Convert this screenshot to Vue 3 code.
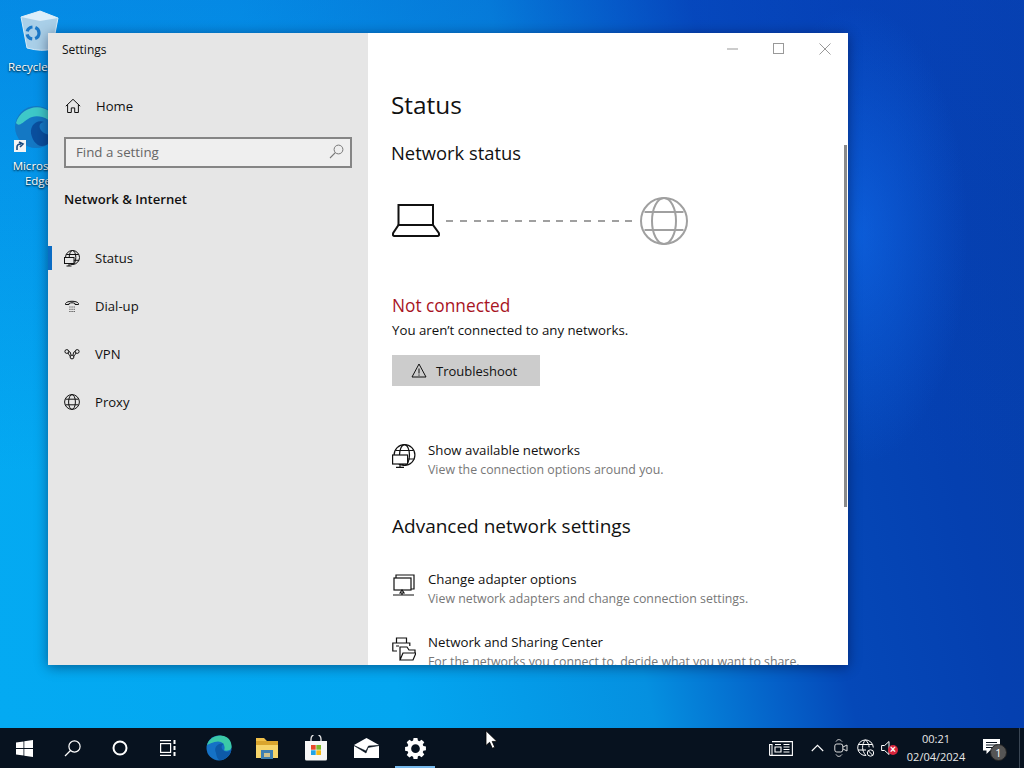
<script setup>
const navItems = [
  { id: 'status', label: 'Status', active: true },
  { id: 'dial', label: 'Dial-up' },
  { id: 'vpn', label: 'VPN' },
  { id: 'proxy', label: 'Proxy' }
]
</script>

<template>
  <div class="desktop">
    <div class="wallpaper">
      <div class="desk-icon recycle">
        <svg width="44" height="46" viewBox="0 0 44 46">
          <path d="M5 9 L24 3 L42 10 L36 41 Q26 44 11 40 Z" fill="#a9cfe8" stroke="#d8ecf8" stroke-width="1"/>
          <path d="M5 9 L24 13 L42 10 L24 3 Z" fill="#dceefa"/>
          <circle cx="17" cy="25" r="6" fill="none" stroke="#1b78c8" stroke-width="3.2" stroke-dasharray="7 3"/>
        </svg>
        <span>Recycle Bin</span>
      </div>
      <div class="desk-icon edge-icon">
        <svg width="44" height="48" viewBox="0 0 44 48">
          <circle cx="22" cy="22" r="21" fill="#1478c4"/>
          <path d="M2 18 C6 4 24 -3 36 7 C42 12 43 18 43 24 C36 12 22 8 14 14 C8 18 5 22 2 18Z" fill="#3ec8c8"/>
          <path d="M18 32 C14 22 22 14 30 17 C24 18 24 24 30 28 C35 31 40 30 43 27 C41 36 30 44 24 40 C21 38 19 35 18 32Z" fill="#0a4f9e"/>
          <rect x="0" y="35" width="12" height="12" fill="#f4f4f4"/>
          <path d="M3 45 L3 42 Q3 39 7 39 M5 37 L9 39 L6 42" fill="none" stroke="#1a4a80" stroke-width="1.6"/>
        </svg>
        <span>Microsoft<br>Edge</span>
      </div>

      <section class="window">
        <aside class="sidebar">
          <div class="win-title">Settings</div>
          <div class="home">
            <svg class="nav-svg" width="16" height="16" viewBox="0 0 16 16">
              <path d="M.8 8.2 8 1.3l7.2 6.9M2.6 6.700v7.800h3.700v-4.600h3.400v4.600h3.700V6.700" fill="none" stroke="#111" stroke-width="1"/>
            </svg>
            <span>Home</span>
          </div>
          <div class="search">
            <span>Find a setting</span>
            <svg width="15" height="15" viewBox="0 0 15 15">
              <circle cx="9.500" cy="5.500" r="4.400" fill="none" stroke="#777" stroke-width="1"/>
              <path d="M6.300 8.700 1 14" stroke="#777" stroke-width="1.100"/>
            </svg>
          </div>
          <div class="group-title">Network &amp; Internet</div>
          <nav class="nav">
            <div v-for="item in navItems" :key="item.id" class="nav-row" :class="{ active: item.active }">
              <svg v-if="item.id === 'status'" width="16" height="17" viewBox="0 0 16 17" fill="none" stroke="#111" stroke-width="1">
                <circle cx="8.500" cy="7.500" r="7"/><ellipse cx="8.500" cy="7.500" rx="3.300" ry="7"/>
                <path d="M2.300 4.500h12.400M2 10.300h13"/>
                <rect x=".5" y="7.500" width="9.500" height="6" fill="#e6e6e6"/><path d="M5 13.500v2.500M2.500 16h5"/>
              </svg>
              <svg v-else-if="item.id === 'dial'" width="16" height="16" viewBox="0 0 16 16" fill="none" stroke="#111" stroke-width="1">
                <path d="M1.500 6.500V5.500C3 2.500 13 2.500 14.500 5.500V6.500H11V5.500C9 4.500 7 4.500 5 5.500V6.500Z"/>
                <path d="M5.500 9h.9M7.600 9h.9M9.700 9h.9M5.500 11.300h.9M7.600 11.300h.9M9.700 11.300h.9M5.500 13.500h.9M7.600 13.500h.9M9.700 13.500h.9"/>
              </svg>
              <svg v-else-if="item.id === 'vpn'" width="16" height="16" viewBox="0 0 16 16" fill="none" stroke="#111" stroke-width="1">
                <circle cx="2.800" cy="5.500" r="1.900"/><circle cx="13.200" cy="5.500" r="1.900"/><circle cx="8" cy="11" r="1.900"/>
                <path d="M4.700 5.500C7 5.500 6.500 8 7 9.300M11.300 5.500C9 5.500 9.500 8 9 9.300M4 7c1 2 2 3 2.200 3.500M12 7c-1 2-2 3-2.200 3.500"/>
              </svg>
              <svg v-else width="16" height="16" viewBox="0 0 16 16" fill="none" stroke="#111" stroke-width="1">
                <circle cx="8" cy="8" r="7.400"/><ellipse cx="8" cy="8" rx="3.400" ry="7.400"/><path d="M1.500 5.200h13M1.500 10.800h13"/>
              </svg>
              <span>{{ item.label }}</span>
            </div>
          </nav>
        </aside>

        <main class="content">
          <div class="controls">
            <svg width="12" height="12" viewBox="0 0 12 12"><path d="M0 6h11" stroke="#999"/></svg>
            <svg width="12" height="12" viewBox="0 0 12 12"><rect x=".5" y=".5" width="10" height="10" fill="none" stroke="#999"/></svg>
            <svg width="12" height="12" viewBox="0 0 12 12"><path d="M.5.5l11 11M11.500.5l-11 11" stroke="#999"/></svg>
          </div>
          <h1>Status</h1>
          <h2>Network status</h2>
          <div class="diagram">
            <svg width="48" height="36" viewBox="0 0 48 36" fill="none" stroke="#111" stroke-width="2">
              <path d="M6.500 22V2h34.500v20"/>
              <path d="M6.500 22 1.200 30Q.3 33 2.500 33H45.500Q47.700 33 46.800 30L41 22Z"/>
            </svg>
            <div class="dashes"></div>
            <svg width="48" height="48" viewBox="0 0 48 48" fill="none" stroke="#a0a0a0" stroke-width="2">
              <circle cx="24" cy="24" r="23"/><ellipse cx="24" cy="24" rx="12" ry="23"/>
              <path d="M4.500 15h39M4.500 33h39"/>
            </svg>
          </div>
          <div class="state">Not connected</div>
          <div class="state-sub">You aren’t connected to any networks.</div>
          <button class="trouble">
            <svg width="16" height="15" viewBox="0 0 16 15" fill="none" stroke="#111" stroke-width="1">
              <path d="M8 1 15 14H1ZM8 5.500V10.500M8 11.500v1.200"/>
            </svg>
            <span>Troubleshoot</span>
          </button>
          <div class="link-row first">
            <svg width="24" height="24" viewBox="0 0 24 24" fill="none" stroke="#111" stroke-width="1.200">
              <circle cx="12.500" cy="11" r="10.400"/><ellipse cx="12.500" cy="11" rx="5" ry="10.400"/>
              <path d="M3.500 6.500h18M2.500 15h20"/>
              <rect x=".6" y="11" width="15" height="9" fill="#fff"/><path d="M8 20v3M4 23.300h8"/>
            </svg>
            <div><div class="link-t">Show available networks</div><div class="link-s">View the connection options around you.</div></div>
          </div>
          <h3>Advanced network settings</h3>
          <div class="link-row adapter">
            <svg width="24" height="24" viewBox="0 0 24 24" fill="none" stroke="#111" stroke-width="1.200">
              <path d="M4 4V1h18v14h-3"/><rect x="2" y="4" width="17" height="12"/>
              <path d="M8 19l2-3 2 3ZM1 21h21M10 19v2"/>
            </svg>
            <div><div class="link-t">Change adapter options</div><div class="link-s">View network adapters and change connection settings.</div></div>
          </div>
          <div class="link-row sharing">
            <svg width="24" height="24" viewBox="0 0 24 24" fill="none" stroke="#111" stroke-width="1.200">
              <path d="M4.500 6V1h10v5M5 14H.8V6h17v3M4 9h3"/>
              <path d="M8 23V10h7l2 3h6v3M8 23h13l3-7H11Z"/>
            </svg>
            <div><div class="link-t">Network and Sharing Center</div><div class="link-s">For the networks you connect to, decide what you want to share.</div></div>
          </div>
          <div class="scroll-thumb"></div>
        </main>
      </section>
    </div>

    <footer class="taskbar">
      <div class="task-left">
        <div class="tb"><svg width="17" height="17" viewBox="0 0 17 17" fill="#fff"><path d="M0 2.500 7.500 1.400V8H0ZM8.300 1.300 17 0V8H8.300ZM0 9H7.500V15.600L0 14.500ZM8.300 9H17V17L8.300 15.700Z"/></svg></div>
        <div class="tb"><svg width="17" height="17" viewBox="0 0 17 17" fill="none" stroke="#fff" stroke-width="1.200"><circle cx="10.500" cy="6.500" r="5.600"/><path d="M6.500 10.500 1 16"/></svg></div>
        <div class="tb"><svg width="16" height="16" viewBox="0 0 16 16" fill="none" stroke="#fff" stroke-width="2"><circle cx="8" cy="8" r="6.500"/></svg></div>
        <div class="tb"><svg width="17" height="16" viewBox="0 0 17 16" fill="none" stroke="#fff" stroke-width="1.200"><path d="M0 .6h11M0 15.400h11"/><rect x=".6" y="3.600" width="10" height="8.800"/><path d="M14.500 0v4M14.500 6v4M14.500 12v4" stroke-width="2"/></svg></div>
        <div class="tb edge"><svg width="26" height="26" viewBox="0 0 26 26">
          <circle cx="13" cy="13" r="12.500" fill="#1572c6"/>
          <path d="M1 10C3 3 11-1 18 1c5 1.500 8 6 7.500 11.500C25 15.500 21 16 18 15.500 20 11 17 6.500 12 6.500 7 6.500 3.500 9 1 10Z" fill="#3bc9a8"/>
          <path d="M10 18C7 12 13 7 18 9c-3 1-3 4-1 6 3 3 7 2 8.500-1-.5 6-7 12-12 11-2-.5-3-4-3.500-7Z" fill="#0d5aa8"/>
        </svg></div>
        <div class="tb"><svg width="24" height="22" viewBox="0 0 24 22">
          <path d="M1 1h8l3 3h11v17H1Z" fill="#f0c04a"/><path d="M1 4h22v4H1Z" fill="#d9a52e"/><path d="M1 8h22v13H1Z" fill="#f6d56b"/>
          <rect x="6" y="13" width="12" height="9" fill="#3f7fb0"/><rect x="9" y="16" width="6" height="4" fill="#cfc28f"/>
        </svg></div>
        <div class="tb store"><svg width="24" height="26" viewBox="0 0 24 26">
          <path d="M7 6V4a5 5 0 0 1 10 0v2" fill="none" stroke="#e8e8e8" stroke-width="1.300"/>
          <path d="M1 6h22v18a1.500 1.500 0 0 1-1.500 1.500h-19A1.500 1.500 0 0 1 1 24Z" fill="#f7f7f7"/>
          <rect x="7" y="10" width="4.700" height="4.700" fill="#e8492a"/><rect x="12.300" y="10" width="4.700" height="4.700" fill="#7cba2a"/>
          <rect x="7" y="15.300" width="4.700" height="4.700" fill="#1fa4e8"/><rect x="12.300" y="15.300" width="4.700" height="4.700" fill="#f5b915"/>
        </svg></div>
        <div class="tb mail"><svg width="25" height="20" viewBox="0 0 25 20">
          <path d="M0 7 12.500 0 25 7v13H0Z" fill="#fff"/>
          <path d="M0 7.500 12 15 14 9.500 25 7.500 14.500 8 12 13Z" fill="#07121f" stroke="#07121f" stroke-width=".6"/>
        </svg></div>
        <div class="tb on"><svg width="21" height="21" viewBox="0 0 20 20">
          <path fill="#fff" fill-rule="evenodd" d="M8 0h4l.5 2.700 1.500.6 2.300-1.600 2.800 2.800-1.600 2.300.6 1.500 2.700.5v4l-2.700.5-.6 1.500 1.600 2.300-2.800 2.800-2.300-1.600-1.500.6L12 22H8l-.5-2.700-1.500-.6-2.300 1.600L.900 17.500l1.600-2.300-.6-1.500L-.8 13.200v-4l2.700-.5.6-1.500L.900 4.500 3.700 1.700 6 3.300l1.500-.6ZM10 6.500a4.500 4.500 0 1 0 0 9 4.500 4.500 0 0 0 0-9Z" transform="translate(.8 .0) scale(.92)"/>
        </svg></div>
      </div>
      <div class="tray">
        <svg class="news" width="24" height="15" viewBox="0 0 24 15" fill="none" stroke="#fff" stroke-width="1.100">
          <path d="M3 .6h20.400v13.800H1A.5.500 0 0 1 .6 14V3.500H3v11M6 3.500h6M6 6h6v5H6ZM14.500 3.500h6M14.500 6h6M14.500 8.500h6M14.500 11h6"/>
        </svg>
        <svg class="chev" width="13" height="8" viewBox="0 0 13 8" fill="none" stroke="#fff" stroke-width="1.100"><path d="M.8 7 6.500 1.300 12.200 7"/></svg>
        <svg class="meet" width="14" height="18" viewBox="0 0 14 18" fill="none" stroke="#ddd" stroke-width="1"><rect x=".8" y="5" width="8" height="8" rx="2"/><path d="m9 8 4-2v6l-4-2M2 2.500C3.500 0 6 0 8 2.500M2 15.500c1.500 2.500 4 2.500 6 0"/></svg>
        <svg class="glb" width="17" height="18" viewBox="0 0 17 18" fill="none" stroke="#fff" stroke-width="1">
          <path d="M9 16.500A7.800 7.800 0 1 1 16.300 8.500M8.500.8c-4 4.500-4 11 .5 15.700M8.500.8c2.800 3 3.500 5 3.600 7.500M1.500 5.500h14M1 11h8"/>
          <circle cx="13.500" cy="14" r="3.200"/><path d="m11.300 11.800 4.400 4.400"/>
        </svg>
        <span class="spk">
          <svg width="12" height="16" viewBox="0 0 12 16" fill="none" stroke="#fff" stroke-width="1"><path d="M.6 5.500h3L8 1.500v13l-4.400-4H.6Z"/></svg>
          <i>×</i>
        </span>
        <div class="clock"><div>00:21</div><div>02/04/2024</div></div>
        <span class="notif">
          <svg width="17" height="15" viewBox="0 0 17 15" fill="#fff"><path d="M0 0h17v11.500H7L3.500 15v-3.500H0Z"/><path d="M3 3.500h11M3 6h11M3 8.500h8" stroke="#07121f"/></svg>
          <b>1</b>
        </span>
        <div class="show-desk"></div>
      </div>
      <svg class="cursor" width="13" height="19" viewBox="0 0 13 19"><path d="M1 .8V15.500l3.600-3.200 2.700 6 2.500-1.100-2.600-5.800h4.800Z" fill="#fff" stroke="#000" stroke-width=".8"/></svg>
    </footer>
  </div>
</template>

<style>
html, body { margin: 0; overflow: hidden; }
</style>

<style scoped>
.desktop {
  width: 1024px; height: 768px; display: flex; flex-direction: column; overflow: hidden;
  font-family: "Open Sans", "Noto Sans", sans-serif; color: #111; position: relative;
}
.wallpaper {
  flex: 1; position: relative;
  background:
    radial-gradient(ellipse 110px 230px at 858px 235px, rgba(16,110,240,.6), rgba(16,110,240,0) 100%),
    linear-gradient(180deg, rgba(8,70,200,.3) 0, rgba(8,70,200,0) 65%),
    linear-gradient(77deg, #04aaf2 0%, #03a6f0 34%, #0590e0 55%, #0560c8 66%, #0548b8 72%, #0540b0 85%, #063ea8 100%);
}
.desk-icon {
  position: absolute; width: 74px; display: flex; flex-direction: column; align-items: center;
  color: #fff; font-size: 11.500px; line-height: 15px; text-align: center; text-shadow: 0 1px 2px #000;
}
.recycle { left: 1px; top: 8px; gap: 5px; }
.edge-icon { left: 1px; top: 105px; gap: 5px; }
.edge-icon svg { margin-right: 4px; }
.window {
  position: absolute; left: 48px; top: 33px; width: 800px; height: 632px; display: flex; overflow: hidden;
  box-shadow: 0 2px 12px rgba(0,0,30,.45);
}
.sidebar { width: 320px; background: #e6e6e6; display: flex; flex-direction: column; flex-shrink: 0; }
.win-title { font-size: 12px; line-height: 16px; margin: 9px 0 0 14px; }
.home { display: flex; align-items: center; gap: 15px; font-size: 13.100px; margin: 38px 0 0 17px; line-height: 20px; height: 20px; }
.nav-svg { display: block; }
.search {
  margin: 21px 16px 0; height: 31px; box-sizing: border-box; border: 2px solid #858585; background: #efefef;
  display: flex; align-items: center; justify-content: space-between; padding: 0 6px 2px 10px;
  font-size: 13.300px; color: #666;
}
.group-title { font-size: 13.100px; font-weight: 600; margin: 21px 0 0 16px; line-height: 20px; }
.nav { margin-top: 25px; display: flex; flex-direction: column; }
.nav-row { height: 48px; display: flex; align-items: center; gap: 15px; padding-left: 16px; font-size: 13.100px; position: relative; }
.nav-row.active::before { content: ""; position: absolute; left: 0; top: 12px; width: 4px; height: 24px; background: #0a6cc4; }
.content { flex: 1; background: #fff; position: relative; overflow: hidden; padding-left: 24px; box-sizing: border-box; }
.controls { position: absolute; right: 17px; top: 10px; display: flex; gap: 34px; }
h1 { font-weight: 400; font-size: 24.400px; line-height: 32px; margin: 56px 0 0 -1px; }
h2 { font-weight: 400; font-size: 18.400px; line-height: 24px; margin: 20px 0 0 -1px; }
h3 { font-weight: 400; font-size: 19px; line-height: 24px; margin: 35px 0 0; }
.diagram { display: flex; align-items: center; margin-top: 32px; height: 48px; }
.dashes {
  width: 186px; margin: 0 8px 0 6px; height: 2px;
  background: repeating-linear-gradient(90deg, #a0a0a0 0 7px, transparent 7px 13.800px);
}
.state { color: #a8141f; font-size: 17.300px; line-height: 24px; margin-top: 49px; }
.state-sub { font-size: 13.250px; line-height: 20px; margin-top: 2px; }
.trouble {
  display: flex; align-items: center; gap: 9px; width: 148px; height: 31px; padding: 0 0 0 19px; margin-top: 15px;
  border: 0; background: #cccccc; font: inherit; font-size: 13px; color: #111;
}
.link-row { display: flex; gap: 12px; align-items: flex-start; }
.link-row > svg { flex-shrink: 0; }
.link-row.first { margin-top: 54px; }
.link-row.first > svg { margin-top: 4px; }
.link-row.adapter { margin-top: 31px; }
.link-row.adapter > svg { margin-top: 5px; }
.link-row.sharing { margin-top: 24px; }
.link-row.sharing > svg { margin-top: 5px; }
.link-t { font-size: 13.250px; line-height: 20px; }
.link-s { font-size: 12.350px; line-height: 18px; margin-top: 1px; color: #777; white-space: nowrap; }
.scroll-thumb { position: absolute; right: 1px; top: 112px; width: 3px; height: 362px; background: #8a8a8a; }
.taskbar {
  height: 40px; flex-shrink: 0; background: #07121f; display: flex; justify-content: space-between; position: relative;
}
.task-left { display: flex; }
.tb { width: 48px; height: 40px; display: flex; align-items: center; justify-content: center; }
.tb.edge { margin-left: 3px; }
.tb.store { margin-left: 1px; }
.tb.mail { margin-left: 2px; }
.tb.on { width: 40px; margin-left: 5px; box-sizing: border-box; border-top: 2px solid transparent; border-bottom: 2px solid #76b9ed; }
.tray { display: flex; align-items: center; color: #fff; }
.news { margin-right: 18px; }
.chev { margin-right: 10px; }
.meet { margin-right: 9px; }
.glb { margin-right: 7px; }
.spk { position: relative; display: flex; width: 24px; }
.spk i { position: absolute; left: 7px; top: 5px; width: 10px; height: 10px; border-radius: 50%; background: #d8243c; font: 700 10px/10px "Liberation Sans", sans-serif; text-align: center; color: #fff; }
.clock { width: 62px; text-align: center; font-size: 11px; line-height: 18px; margin-right: 15px; color: #e8e8e8; }
.notif { position: relative; display: flex; width: 29px; margin-right: 8px; padding-left: 1px; box-sizing: border-box; top: -2px; }
.notif b { position: absolute; left: 8px; top: 5px; width: 17px; height: 17px; border-radius: 50%; background: #555; border: 1px solid #222; box-sizing: border-box; font: 400 11px/15px "Open Sans", sans-serif; text-align: center; }
.show-desk { width: 1px; height: 40px; background: #3a4654; margin-right: 4px; }
.cursor { position: absolute; left: 485px; top: 2px; }
</style>
